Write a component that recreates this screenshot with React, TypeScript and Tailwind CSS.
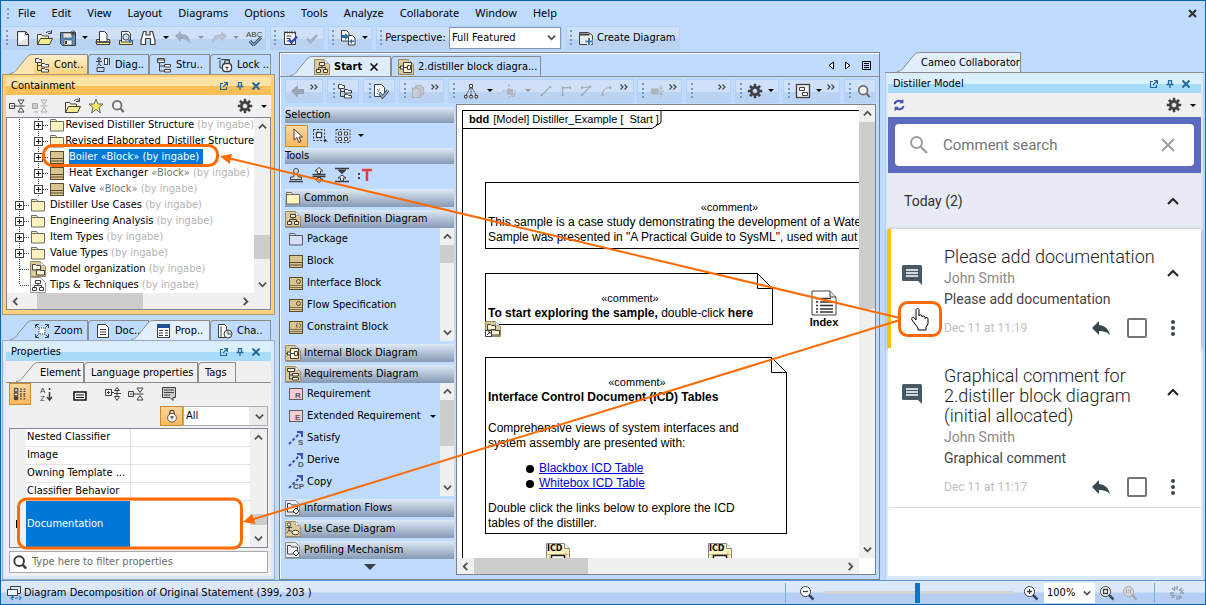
import React from "react";

const K = "#3f3f3f";
const Y = "#f5ec8e";
const TAN = "#d9c48f";
const B = "#3f7cb0";

const docTan = <path d="M.5.5h10l5 5v10H.5z" fill="#dcc99a" stroke="#9b8a60" />;
const docTanFold = <path d="M10.5.5v4h4z" fill="#fff" stroke="#aaa" />;

const ART: Record<string, React.ReactNode> = {
  file: <><path d="M2.5 1.5h8l3 3v11h-11z" fill="#e2e2e2" stroke={K} /><path d="M4 3h5v3h3v2l-8 4z" fill="#fff" /><path d="M10.500 1.500v3h3" fill="none" stroke={K} /></>,
  open: <><path d="M.500 14.500V4.500h4l1 1.500h6v3" fill="#fffbd0" stroke={K} /><path d="M.500 14.500l3-6h12l-3 6z" fill={Y} stroke={K} /><path d="M9 3c1.500-2 3.500-2 5-.5M14.500 0v3.500h-3.500" fill="none" stroke={K} /></>,
  save: <><path d="M.5 2.500h13l2 0v13h-13l-2-2z" fill="#5b8fc4" stroke={K} /><path d="M3 3h9v5H3z" fill="#e4e4e4" stroke={K} strokeWidth=".6" /><path d="M4 10h8v5H4z" fill="#f3f3f3" stroke={K} strokeWidth=".6" /><path d="M5 11h2v3H5z" fill={K} /><path d="M13 0v6M10 3h6M11 1l4 4M15 1l-4 4" stroke={K} strokeWidth=".8" /></>,
  print: <><path d="M1.500 9.500h13v5h-13z" fill={Y} stroke={K} /><path d="M4.500 1.500h5l2.500 2.500v8H4.500z" fill="#fff" stroke={K} /><path d="M.500 12h15" stroke={K} strokeWidth="1.500" /></>,
  preview: <><path d="M1.500 10.500h13v4h-13z" fill={Y} stroke={K} /><path d="M3.500 1.500h7l2 2v8.500h-9z" fill="#fff" stroke={K} /><circle cx="8" cy="7" r="3.200" fill="#bfe0ff" stroke={K} /><path d="M10.500 9.500l2.500 3" stroke={B} strokeWidth="2" /></>,
  binoc: <path d="M3.500 1.500h2.500v3.500h4V1.500h2.500l2.500 9v4h-4.500V8.500h-5v6H1.000v-4z" fill="#fff" stroke={K} strokeWidth="1.200" />,
  undo: <path d="M0 6l6-5v3c6 0 9.500 3 9.500 11C14 11 11 9 6 9v3z" fill="#9fadbd" />,
  redo: <path d="M16 6l-6-5v3C4 4 .500 7 .500 15 2 11 5 9 10 9v3z" fill="#b4c2d2" />,
  abc: <><text x="0" y="7" fontSize="8" fontFamily="Liberation Sans" fill={K}>ABC</text><path d="M4 11l3.500 4L15 7.500" fill="none" stroke={K} strokeWidth="3" /><path d="M4 11l3.500 4L15 7.500" fill="none" stroke="#6f9fd0" strokeWidth="1.500" /></>,
  note: <><path d="M2.500 2.500h11v12h-11z" fill="#fff" stroke={K} /><path d="M2 2.500h12" stroke={K} strokeWidth="2" strokeDasharray="1.500 1" /><path d="M4.500 6h5M4.500 8.500h4M4.500 11h3" stroke={K} /><path d="M7 9.500l2.500 3L15 6.500" fill="none" stroke="#2f45b5" strokeWidth="2.500" /></>,
  check: <path d="M3 8.500l3.500 3.500L13 5" fill="none" stroke="#a5b4c4" strokeWidth="3" />,
  transfer: <><path d="M1.500.500h5l2.500 2.500v8H1.500z" fill="#fff" stroke={K} /><path d="M8.500 5.500h4l2.500 2.500v7H8.500z" fill="#fff" stroke={K} /><path d="M2 5h3V3l4 3.500-4 3.500V8H2z" fill="#2d6ea8" /><path d="M14 12h-2v2l-3-2.800L12 9v1.500h2z" fill="#2d6ea8" /></>,
  create: <><path d="M1.500 2.500h9l4 3v9h-13z" fill="#e9e9e9" stroke={K} /><path d="M1.500 4.500h10" stroke={K} strokeWidth="2" /><path d="M11 8v7M7.500 11.500h7" stroke="#fff" strokeWidth="4" /><path d="M11 8v7M7.500 11.500h7" stroke={B} strokeWidth="2" /></>,
  tree: <><path d="M1.500 1.500h3l1 1h2v3h-6zM7.500 6.500h3l1 1h3v2.500h-7zM7.500 11.500h3l1 1h3v2.500h-7z" fill="#fff" stroke={K} /><path d="M3.500 6v7.500h4M3.500 8.500h4" fill="none" stroke={K} /></>,
  struct: <><path d="M1.500 1.500h7v4h-7zM8.500 7.500h6v2.500h-6zM8.500 12.500h6v2.500h-6z" fill="#fff" stroke={K} /><path d="M3.500 6v8h5M3.500 9h5M1.500 3h7" fill="none" stroke={K} /></>,
  diag: <><circle cx="4" cy="2" r="1.300" fill="none" stroke={K} /><path d="M4 3.500v3M1 4.500h6M2 9l2-2.500L6 9M2 10.500h7v4H2z" fill="none" stroke={K} /><rect x="9.500" y="1.500" width="3" height="6" fill="#fff" stroke={K} /><path d="M14.500 1v7" stroke={K} /></>,
  locktree: <><path d="M.5 1.500h3l1 1h8v2M3 3v8h3" fill="none" stroke={K} /><rect x="5.500" y="6.500" width="9" height="8" rx="3" fill="#fff" stroke={K} strokeWidth="1.300" /><path d="M7.500 6.500v-1a2.500 2.500 0 015 0v1M10 9.500v3M8.500 10.500h3" fill="none" stroke={K} strokeWidth="1.200" /></>,
  bdd: <>{docTan}{docTanFold}<path d="M5.500 3.500h5v3h-5zM2.500 10.500h4v3h-4zM9.500 10.500h4v3h-4z" fill="#fff6cf" stroke={K} /><path d="M8 6.500v2M4.500 10.500v-2h7v2" fill="none" stroke={K} /></>,
  bddw: <><path d="M.5.5h10l5 5v10H.5z" fill="#fff" stroke="#999" /><path d="M5.500 3.500h5v3h-5zM2.500 10.500h4v3h-4zM9.500 10.500h4v3h-4z" fill="#fff" stroke={K} /><path d="M8 6.500v2M4.500 10.500v-2h7v2" fill="none" stroke={K} /></>,
  ibd: <>{docTan}{docTanFold}<path d="M5.500 3.500h8v10h-8z" fill="#fff6cf" stroke={K} /><path d="M9.500 6.500h3v4h-3zM1 8.500h2M5 8.500h4" fill="none" stroke={K} /><rect x="2.500" y="7" width="3" height="3" fill="#fff" stroke={K} /></>,
  req: <>{docTan}{docTanFold}<path d="M2.500 2.500h7v3h-7zM7.500 7.500h6v2.500h-6zM7.500 11.500h6v2.500h-6z" fill="#fff6cf" stroke={K} /><path d="M4.500 5.500v7.500h3M4.500 9h3" fill="none" stroke={K} /></>,
  mdl: <>{docTan}{docTanFold}<path d="M2.500 3.500h3l1 1h4v4.500h-8zM6.500 8.500h3l1 1h4v4.500h-8z" fill="#fffbd0" stroke={K} /></>,
  mdllink: <>{docTan}{docTanFold}<path d="M2.500 3.500h3l1 1h4v4.500h-8zM6.500 8.500h3l1 1h4v4.500h-8z" fill="#fffbd0" stroke={K} /><path d="M.5 9.500h6v6h-6z" fill="#fff" stroke={K} /><path d="M2 14l3-3M3 11h2v2" fill="none" stroke={K} /></>,
  usecase: <>{docTan}{docTanFold}<circle cx="4" cy="3.500" r="1.700" fill="#fff" stroke={K} /><path d="M4 5v4M1.500 6.500h5.500M2 12l2-3 3 2" fill="none" stroke={K} /><ellipse cx="10.500" cy="11.500" rx="3.500" ry="2.200" fill="#fff6cf" stroke={K} /></>,
  prof: <><path d="M.5.500h10l4 4v11H.5z" fill="#e9ebf4" stroke="#888" /><path d="M2.500 3.500h3l1 1.500h6v7h-10z" fill="#fff" stroke={K} /><path d="M11 8l3 3-3 3-3-3z" fill="#fff" stroke={K} /></>,
  folder: <><path d="M1.500 14V2.500h5l1.500 2h6.500V14z" fill="#fff3bd" stroke="#6b6b6b" /><path d="M1.500 4.500h7" stroke="#6b6b6b" /></>,
  pkg: <><path d="M1.500 14V2.500h5l1.500 2h6.500V14z" fill="#d9def8" stroke="#5b5b66" /><path d="M1.500 4.500h7" stroke="#5b5b66" /></>,
  block: <><rect x="1.500" y="2.500" width="13" height="12" fill={TAN} stroke="#5a4d31" /><path d="M1.500 9.500h13M1.500 12h13" stroke="#5a4d31" /></>,
  iblock: <><rect x="1.500" y="2.500" width="13" height="12" fill={TAN} stroke="#5a4d31" /><path d="M1.500 10.500h13M1.500 12.500h13" stroke="#5a4d31" strokeWidth=".7" /><circle cx="10.500" cy="6.500" r="2" fill="none" stroke="#5a4d31" /></>,
  cblock: <><rect x="1.500" y="2.500" width="13" height="12" fill={TAN} stroke="#5a4d31" /><path d="M1.500 10.500h13M1.500 12.500h13" stroke="#5a4d31" strokeWidth=".7" /><path d="M9.500 4.500c-1.500 0 0 2-1.500 2 1.500 0 0 2 1.500 2M11.500 4.500c1.500 0 0 2 1.500 2-1.500 0 0 2-1.500 2" fill="none" stroke="#5a4d31" /></>,
  reqR: <><rect x="1.500" y="2.500" width="13" height="11" fill="#f8ccd2" stroke="#5b5b5b" /><text x="7" y="12" fontSize="8" fontWeight="bold" fontFamily="Liberation Sans" fill="#555">R</text></>,
  reqE: <><rect x="1.500" y="2.500" width="13" height="11" fill="#f8ccd2" stroke="#5b5b5b" /><text x="7" y="12" fontSize="8" fontWeight="bold" fontFamily="Liberation Sans" fill="#555">E</text></>,
  relS: <><path d="M1 14l12-12" stroke="#3f51b5" strokeWidth="2" strokeDasharray="3 2" /><path d="M9 2h5v5" fill="none" stroke="#3f51b5" strokeWidth="2" /><text x="10" y="15" fontSize="8" fontWeight="bold" fontFamily="Liberation Sans" fill="#555">S</text></>,
  relD: <><path d="M1 14l12-12" stroke="#3f51b5" strokeWidth="2" strokeDasharray="3 2" /><path d="M9 2h5v5" fill="none" stroke="#3f51b5" strokeWidth="2" /><text x="10" y="15" fontSize="8" fontWeight="bold" fontFamily="Liberation Sans" fill="#555">D</text></>,
  relC: <><path d="M1 14l12-12" stroke="#3f51b5" strokeWidth="2" strokeDasharray="3 2" /><path d="M9 2h5v5" fill="none" stroke="#3f51b5" strokeWidth="2" /><text x="5" y="15" fontSize="8" fontWeight="bold" fontFamily="Liberation Sans" fill="#555">CP</text></>,
  back: <path d="M1 8l7-6v4h6v5H8v4z" fill="#9aa6b5" />,
  verify: <><path d="M1.500 1.500h7l3 3v9h-10z" fill="#fff" stroke={K} /><path d="M4 6l4 5M4 11l3-6" stroke={K} strokeDasharray="1 1" /><path d="M6.500 10l3 4L15 7.500" fill="none" stroke={K} strokeWidth="3" /><path d="M6.500 10l3 4L15 7.500" fill="none" stroke="#8fb6d8" strokeWidth="1.500" /></>,
  copy: <><path d="M5.500 1.500h6l3 3v8h-9z" fill="#c3c7cc" stroke="#a8adb3" /><path d="M1.500 4.500h6l3 3v8h-9z" fill="#c8ccd0" stroke="#a8adb3" /></>,
  layout: <><path d="M6.500 1.500h3v3h-3zM1.500 12.500h2.500v2.500H1.500zM6.800 12.500h2.500v2.500H6.800zM12 12.500h2.500v2.500H12z" fill="#fff" stroke={K} /><path d="M8 4.500v8M7 5L3 12.500M9 5l4.500 7.500" stroke={K} strokeDasharray="2 1" /></>,
  cross: <><rect x="6" y="6" width="6" height="6" fill="#b5b9be" /><path d="M8 1v14M1 8h14" stroke="#a8adb3" strokeDasharray="3 1" /><rect x="10" y="10" width="4" height="4" fill="#b5b9be" /></>,
  line: <><path d="M3 13L13 3" stroke="#a8adb3" strokeWidth="1.500" /><path d="M1 12h3v3H1zM12 1h3v3h-3z" fill="#a8adb3" /></>,
  rect1: <><path d="M3.500 14V3.500H13" fill="none" stroke="#a8adb3" strokeWidth="1.500" /><path d="M2 12h3v3H2zM12 2h3v3h-3zM2 2h3v3H2z" fill="#a8adb3" /></>,
  obl: <><path d="M3 3h10L3 13h2" fill="none" stroke="#a8adb3" strokeWidth="1.500" /><path d="M1 12h3v3H1zM12 1h3v3h-3zM1 2h3v3H1z" fill="#a8adb3" /></>,
  arc: <><path d="M3 14c0-7 3-10 11-11" fill="none" stroke="#a8adb3" strokeWidth="1.500" /><path d="M2 12h3v3H2zM12 2h3v3h-3z" fill="#a8adb3" /></>,
  size: <><rect x="1" y="5" width="9" height="7" fill="#b0b5ba" /><path d="M12.500 1v5M12.500 15v-5M10 8h6M10.500 4l2 2 2-2M10.500 12l2-2 2 2" fill="none" stroke="#a8adb3" /></>,
  gear: <><path d="M7 1h2v2.200l1.500.6L12.200 2.200l1.500 1.500-1.600 1.700.6 1.600H15v2h-2.300l-.6 1.600 1.600 1.700-1.500 1.500-1.700-1.600-1.500.6V15H7v-2.200l-1.500-.6-1.700 1.600-1.500-1.500 1.600-1.700L3.300 9H1V7h2.300l.6-1.600-1.600-1.700 1.500-1.500 1.700 1.600L7 3.200zM8 5.500a2.500 2.500 0 100 5 2.500 2.500 0 000-5z" fill={K} stroke={K} strokeWidth=".5" fillRule="evenodd" /></>,
  align: <><rect x="1.500" y="1.500" width="13" height="13" fill="#eee" stroke={K} strokeWidth="1.300" /><path d="M4.500 4.500h5v3h-5zM7.500 9.500h5v3h-5z" fill="#fff" stroke={K} /></>,
  mag: <><circle cx="7" cy="7" r="5" fill="#f4f4f4" stroke="#6a6a6a" strokeWidth="2" /><path d="M11 11l3.500 4" stroke="#6a6a6a" strokeWidth="2.500" /></>,
  magDark: <><circle cx="7" cy="7" r="5.500" fill="#fff" stroke="#3a3a3a" strokeWidth="2.200" /><path d="M11 11l4 4.500" stroke="#3a3a3a" strokeWidth="2.800" /></>,
  collapse: <><path d="M.5 5.500h5v5h-5zM2 8h2.500M6 8h2.500" fill="none" stroke={K} /><path d="M9 2h6l-3 4.500zM9 14h6l-3-4.500z" fill="#fff" stroke={K} /><path d="M8.500 8h7" stroke={K} /></>,
  collapseG: <><path d="M.5 5.500h5v5h-5z" fill="#ccc" stroke="#aaa" /><path d="M9 2h6l-3 4.500zM9 14h6l-3-4.500zM8.500 8h7M2 14h4" fill="none" stroke="#aaa" /></>,
  expand: <><path d="M.5 3.500h6v6h-6zM2 6.500h3M3.500 5v3M7 6.500h2" fill="none" stroke={K} /><path d="M9.500 4.500h5l-2.500-3zM9.500 10.500h5l-2.500 4zM9 7.500h7M12 5v6" fill="#fff" stroke={K} /></>,
  star: <path d="M8 1l2 5h5l-4 3.500 1.500 5.500L8 11.500 3.500 15 5 9.500 1 6h5z" fill="#f6ec6a" stroke="#666" />,
  zoomfit: <><rect x="5" y="5" width="6" height="6" fill="#fff" stroke={K} strokeDasharray="1 1" /><path d="M1.500 5V1.500H5M11 1.500h3.500V5M14.500 11v3.500H11M5 14.500H1.500V11M2 2l2.500 2.500M14 2l-2.500 2.500M14 14l-2.500-2.500M2 14l2.500-2.500" fill="none" stroke={K} /></>,
  doc: <><path d="M2.500 1.500h8l3 3v10h-11z" fill="#fff" stroke={K} /><path d="M5 6.500h6M5 9h6M5 11.500h6" stroke={K} /></>,
  props: <><rect x="2.500" y="1.500" width="12" height="13" fill="#fff" stroke={K} /><path d="M2 1h13v4H2z" fill="#1f4f9a" /><path d="M4 7.500h4M10 7.500h3M4 10h4M10 10h3M4 12.500h4M10 12.500h3" stroke={K} /></>,
  hist: <><path d="M1.500 1.500h6l2 2v11h-8zM4 3.500v11" fill="#fff" stroke={K} /><circle cx="11" cy="11" r="4" fill="#eee" stroke={K} /><path d="M11 8v3h3" fill="none" stroke={K} /></>,
  cat: <><path d="M1.500 1.500h4v4h-4zM1.500 6.500h4v4h-4zM1.500 11.500h4v3h-4z" fill={K} stroke={K} /><path d="M2 3.500h3M3.500 2v3M2 8.500h3M3.500 7v3" stroke="#fff" /><path d="M8 2.500h2M12 2.500h2M8 5h2M12 5h2M8 8h2M12 8h2M8 10.500h2M12 10.500h2M8 13.500h2M12 13.500h2" stroke={K} strokeWidth="1.500" /></>,
  az: <><text x="1" y="7" fontSize="8" fontFamily="Liberation Sans" fill={K}>A</text><text x="1" y="15" fontSize="8" fontFamily="Liberation Sans" fill={K}>Z</text><path d="M10.500 2v2M10.500 6v7M8 11l2.500 3 2.500-3" fill="none" stroke={K} strokeWidth="1.500" /></>,
  field: <><rect x="2" y="6" width="12" height="8" fill="#fff" stroke="#000" strokeWidth="1.400" /><path d="M4 9h8M4 11.500h8" stroke="#000" /></>,
  speech: <><path d="M1.500 1.500h13v10H12v3l-3-3H1.500z" fill="#ccc" stroke={K} /><path d="M3 4h10M3 6.500h10M3 9h6" stroke={K} /></>,
  lock: <><circle cx="8" cy="10" r="5" fill="#fff" stroke={K} /><path d="M5.500 6V4a2.500 2.500 0 015 0v2M8 8.500v3.500M6 9h4" fill="none" stroke={K} strokeWidth="1.200" /></>,
  cursor: <path d="M5 1v11l3-2.500 2 5 2-1-2-4.500h3.500z" fill="#fff" stroke={K} />,
  sel: <><path d="M1.500 1.500h11v11h-11z" fill="none" stroke={K} strokeDasharray="2 1.500" /><rect x="4.500" y="4.500" width="5" height="5" fill="#fff" stroke={K} strokeWidth="1.300" /><path d="M12 10v5l1.500-1.500H16z" fill={K} /></>,
  selmany: <><path d="M1 1.500h14v13H1z" fill="none" stroke={K} strokeDasharray="2 1.500" /><path d="M3.500 4h3v3h-3zM9.500 4h3v3h-3zM3.500 9.500h3v3h-3zM9.500 9.500h3v3h-3z" fill="#fff" stroke={K} /></>,
  stamp: <><circle cx="8" cy="4" r="2.500" fill="#ddd" stroke={K} /><path d="M6.500 6.500L5.500 10H2.500v2.500h11V10h-3L9.500 6.500" fill="#ddd" stroke={K} /><path d="M1 14.500h14" stroke={K} strokeWidth="1.500" /></>,
  split: <><path d="M8 .5l4 3.500H9.500v2.500h-3V4H4zM8 15.500L4 12h2.500v-1.500h3V12H12z" fill="#e8e8e8" stroke={K} /><path d="M1.500 7.500h13M1.500 9.500h13" stroke={K} strokeWidth="1.300" /></>,
  merge: <><path d="M1 1.500h14M1 14.500h14" stroke={K} strokeWidth="1.500" /><path d="M8 6.500L4 3h8z" fill={K} stroke={K} /><path d="M8 8l4 3H9.500v3h-3v-3H4z" fill="#e8e8e8" stroke={K} /></>,
  text: <><path d="M5 3h10M10 3v11" stroke="#e53935" strokeWidth="2.500" /><path d="M2 6v2M2 10v2" stroke="#444" strokeWidth="2" /></>,
  zin: <><circle cx="6.500" cy="6.500" r="5" fill="#fff" stroke={K} /><path d="M4 6.500h5M6.500 4v5" stroke={K} strokeWidth="1.300" /><path d="M10 10l4.500 4.500" stroke="#3a4a63" strokeWidth="2.500" /></>,
  zout: <><circle cx="6.500" cy="6.500" r="5" fill="#fff" stroke={K} /><path d="M4 6.500h5" stroke={K} strokeWidth="1.300" /><path d="M10 10l4.500 4.500" stroke="#3a4a63" strokeWidth="2.500" /></>,
  zfit: <><circle cx="6.500" cy="6.500" r="5" fill="#fff" stroke={K} /><path d="M4.500 4.500h4v4h-4z" fill="none" stroke={K} strokeWidth="1.300" /><path d="M10 10l4.500 4.500" stroke="#3a4a63" strokeWidth="2.500" /></>,
  zone: <><circle cx="6.500" cy="6.500" r="5" fill="#d6d6d6" stroke="#aaa" /><path d="M4.500 4.500v4M8.500 4.500v4M6.500 5v1M6.500 7.500v1" stroke="#aaa" /><path d="M10 10l4.500 4.500" stroke="#aaa" strokeWidth="2.500" /></>,
  spin: <g stroke="#8d9aab" strokeWidth="1.300"><path d="M8 1v4M8 11v4M1 8h4M11 8h4M3 3l2.800 2.800M10.200 10.200L13 13M3 13l2.800-2.800M10.200 5.800L13 3M5.300 1.500l1 3M10.700 14.500l-1-3M1.500 10.700l3-1M14.500 5.300l-3 1" /></g>,
  pc: <><path d="M4.500 1.500h10v7h-10z" fill="#dcebfa" stroke={K} /><path d="M1.500 4.500h10v6h-10z" fill="#eef6ff" stroke={K} /><path d="M5 12.500h3M6.500 10.500v2" stroke={K} /><path d="M7 11l-2 2 2 2M13 11l2 2-2 2M9 13h3" fill="none" stroke="#2d7ec4" strokeWidth="1.200" /></>,
  refresh: <><path d="M2 7c0-3 3-5 6-5l3 .5 2-1.500v5H8l1.500-1.500C7 3.500 5 5 4 7zM14 9c0 3-3 5-6 5l-3-.5L3 15v-5h5l-1.500 1.500C9 12.500 11 11 12 9z" fill="#3f51b5" /></>,
};

function Icon({ n, className = "size-4" }: { n: string; className?: string }) {
  return (
    <svg viewBox="0 0 16 16" className={`shrink-0 ${className}`} aria-hidden="true">
      {ART[n]}
    </svg>
  );
}

function Tool({ n, label = n, className = "size-4" }: { n: string; label?: string; className?: string }) {
  return (
    <button type="button" aria-label={label} className="flex shrink-0 items-center justify-center">
      <Icon n={n} className={className} />
    </button>
  );
}

function Drop({ className = "text-black" }: { className?: string }) {
  return (
    <svg viewBox="0 0 6 3" className={`h-[3px] w-[6px] shrink-0 ${className}`} aria-hidden="true">
      <path d="M0 0h6L3 3z" fill="currentColor" />
    </svg>
  );
}

function More() {
  return (
    <svg viewBox="0 0 8 6" className="mb-2 h-[6px] w-2 shrink-0" aria-hidden="true">
      <path d="M.5.500L3 3 .5 5.500M4.500.500L7 3 4.500 5.500" fill="none" stroke="#444" strokeWidth="1.200" />
    </svg>
  );
}

function Grip() {
  return <span className="h-[15px] w-0 shrink-0 border-l-2 border-dotted border-[#6f9bd1]" />;
}

function Group({ className = "", children }: { className?: string; children: React.ReactNode }) {
  return (
    <div className={`flex h-6 shrink-0 items-center border border-[#b4d2f6] bg-linear-to-b from-[#cfe1f8] from-55% to-[#bad3f3] to-55% ${className}`}>
      {children}
    </div>
  );
}

function Chevron({ d, className }: { d: string; className: string }) {
  return (
    <svg viewBox="0 0 10 10" className={`shrink-0 ${className}`} aria-hidden="true">
      <path d={d} fill="none" stroke="#505050" strokeWidth="2" />
    </svg>
  );
}

function VScroll({ gap, thumb, width = "w-4" }: { gap: string; thumb: string; width?: string }) {
  return (
    <div className={`flex shrink-0 flex-col items-center bg-[#f0f0f0] ${width}`}>
      <span className="flex h-[17px] items-center"><Chevron d="M1 7l4-4 4 4" className="size-[9px]" /></span>
      <span className={`min-h-0 shrink ${gap}`} />
      <span className={`w-full bg-[#cdcdcd] ${thumb}`} />
      <span className="mt-auto flex h-[17px] items-center"><Chevron d="M1 3l4 4 4-4" className="size-[9px]" /></span>
    </div>
  );
}

function HScroll({ gap, thumb }: { gap: string; thumb: string }) {
  return (
    <div className="flex h-4 flex-1 items-center bg-[#f0f0f0]">
      <span className="flex w-[17px] justify-center"><Chevron d="M7 1L3 5l4 4" className="size-[9px]" /></span>
      <span className={gap} />
      <span className={`h-full bg-[#cdcdcd] ${thumb}`} />
      <span className="ml-auto flex w-[17px] justify-center"><Chevron d="M3 1l4 4-4 4" className="size-[9px]" /></span>
    </div>
  );
}

function Slant({ tone }: { tone: string }) {
  return (
    <svg viewBox="0 0 24 20" preserveAspectRatio="none" className={`h-5 w-6 shrink-0 ${tone}`} aria-hidden="true">
      <path d="M0 20C4 19 5 18 8 14L17 3C19 1 20 .5 24 .5V20z" fill="currentColor" />
      <path d="M0 19.500C4 19 5 18 8 14L17 3C19 1 20 .5 24 .5" fill="none" stroke="#8c8c8c" />
    </svg>
  );
}

function Tab({ icon, label, className, slant, tone = "bg-[#bfdbff]" }: { icon?: string; label: string; className: string; slant?: string; tone?: string }) {
  return (
    <button type="button" role="tab" className={`flex h-5 shrink-0 ${className}`}>
      {slant && <Slant tone={slant} />}
      <span className={`flex h-5 min-w-0 flex-1 items-center gap-1 border-t border-r border-[#8c8c8c] whitespace-nowrap ${tone} ${slant ? "" : "rounded-tl-sm border-l pl-[6px]"}`}>
        {icon && <Icon n={icon} />}
        {label}
      </span>
    </button>
  );
}

function TitleBar({ title, tone }: { title: string; tone: string }) {
  return (
    <div className={`flex h-[18px] shrink-0 items-center bg-linear-to-b pr-[10px] pl-[5px] ${tone}`}>
      <h2 className="flex-1">{title}</h2>
      <div className="flex items-center gap-[6px] text-[#256a9e]">
        <button type="button" aria-label="Float" className="p-px">
          <svg viewBox="0 0 8 8" className="size-[8px]"><path d="M3 1.500H.5v6h6V5M4 .5h3.500V4M7 1L3 5" fill="none" stroke="currentColor" strokeWidth="1.200" /></svg>
        </button>
        <button type="button" aria-label="Pin" className="p-px">
          <svg viewBox="0 0 8 8" className="size-[8px]"><path d="M2 .5h4M2.500.500v4M5.500.500v4M.5 4.500h7M4 4.500V8" fill="none" stroke="currentColor" strokeWidth="1.300" /></svg>
        </button>
        <button type="button" aria-label="Close" className="p-px">
          <svg viewBox="0 0 8 8" className="size-[8px]"><path d="M.5.500l7 7M7.500.500l-7 7" stroke="currentColor" strokeWidth="2" /></svg>
        </button>
      </div>
    </div>
  );
}

function Guide({ kind }: { kind: "line" | "plus" | "branch" | "end" }) {
  return (
    <svg viewBox="0 0 19 16" className="h-4 w-[19px] shrink-0" aria-hidden="true">
      <g stroke="#444" strokeDasharray="1 1" fill="none">
        <path d={kind === "end" ? "M9.500 0v8" : "M9.500 0v16"} />
        {kind !== "line" && <path d="M10 8.500h9" />}
      </g>
      {kind === "plus" && (
        <>
          <rect x="5.500" y="4.500" width="8" height="8" fill="#fff" stroke="#444" />
          <path d="M7 8.500h5M9.500 6v5" stroke="#222" />
        </>
      )}
    </svg>
  );
}

const NODES = [
  { deep: true, icon: "folder", name: "Revised Distiller Structure" },
  { deep: true, icon: "folder", name: "Revised Elaborated  Distiller Structure" },
  { deep: true, icon: "block", name: "Boiler", stereo: true, selected: true },
  { deep: true, icon: "block", name: "Heat Exchanger", stereo: true },
  { deep: true, icon: "block", name: "Valve", stereo: true },
  { icon: "folder", name: "Distiller Use Cases" },
  { icon: "folder", name: "Engineering Analysis" },
  { icon: "folder", name: "Item Types" },
  { icon: "folder", name: "Value Types" },
  { icon: "mdl", name: "model organization", leaf: true },
  { icon: "bddw", name: "Tips & Techniques", leaf: true, last: true },
];

function Containment() {
  return (
    <section className="flex min-h-0 flex-1 flex-col border border-[#a8987a] bg-[#ffd17a] px-[3px] pt-[2px] pb-1">
      <TitleBar title="Containment" tone="from-[#ffe2a6] from-50% to-[#ffbf57] to-50%" />
      <div className="flex h-[22px] shrink-0 items-center bg-[#f0f0f0] pr-1 pl-[3px]">
        <div className="flex flex-1 items-center gap-[7px]">
          <Tool n="collapse" /><Tool n="collapseG" label="Collapse selected" />
          <span className="w-[3px]" />
          <Tool n="open" /><Tool n="star" label="Favorites" /><Tool n="mag" label="Find" className="size-[14px]" />
        </div>
        <div className="flex items-center gap-2"><Tool n="gear" label="Options" /><Drop /></div>
      </div>
      <div className="flex min-h-0 flex-1 border border-b-0 border-[#7f8792] bg-white">
        <ul className="flex min-w-0 flex-1 flex-col justify-end overflow-hidden pl-[3px]">
          {NODES.map((n) => (
            <li key={n.name} className="flex h-4 shrink-0 items-center whitespace-pre">
              {n.deep && <Guide kind="line" />}
              <Guide kind={n.last ? "end" : n.leaf ? "branch" : "plus"} />
              <span className="flex w-[21px] pl-px"><Icon n={n.icon} /></span>
              <span className={n.selected ? "bg-[#0078d7] pr-1 text-white" : ""}>
                {n.name}
                {n.stereo && <span className={n.selected ? "" : "text-[#777]"}> «Block»</span>}
                {n.name.includes("Elaborated") ? null : <span className={n.selected ? "" : "text-[#b4b4b4]"}> (by ingabe)</span>}
              </span>
            </li>
          ))}
        </ul>
        <VScroll gap="h-[100px]" thumb="h-6" />
      </div>
      <div className="flex shrink-0 border border-t-0 border-[#7f8792] bg-[#f0f0f0] pr-4">
        <HScroll gap="w-[13px]" thumb="w-[106px]" />
      </div>
    </section>
  );
}

function Properties() {
  return (
    <section className="flex h-[240px] shrink-0 flex-col border border-[#9dabc0] bg-[#dbe9fc] p-[3px] pt-[2px]">
      <TitleBar title="Properties" tone="from-[#daf1fd] from-50% to-[#a6dcf8] to-50%" />
      <div role="tablist" className="flex shrink-0 items-end border-b border-[#8c8c8c] bg-[#f0f0f0] pt-px pl-[10px]">
        <Tab label="Element" slant="text-[#f0f0f0]" tone="bg-[#f0f0f0]" className="w-[68px]" />
        <Tab label="Language properties" tone="bg-[#f0f0f0]" className="w-[114px]" />
        <Tab label="Tags" tone="bg-[#f0f0f0]" className="w-[38px]" />
      </div>
      <div className="flex min-h-0 flex-1 flex-col bg-[#f0f0f0] px-[3px] pb-[3px]">
        <div className="flex shrink-0 items-center gap-2">
          <button type="button" aria-label="Categorized view" className="flex size-[22px] items-center justify-center border border-[#c98a32] bg-linear-to-b from-[#fbd79c] to-[#fdb75a]"><Icon n="cat" className="size-[14px]" /></button>
          <div className="flex items-center gap-[7px]">
            <Tool n="az" label="Sort" /><span className="w-[3px]" /><Tool n="field" label="Show description" />
            <span className="w-[3px]" /><Tool n="expand" /><Tool n="collapse" /><span className="w-[3px]" /><Tool n="speech" label="Comment" />
          </div>
        </div>
        <div className="flex shrink-0 items-center justify-end pt-px">
          <button type="button" aria-label="Lock" className="flex h-5 w-[23px] items-center justify-center border border-[#c98a32] bg-linear-to-b from-[#fbd79c] to-[#fdb75a]"><Icon n="lock" className="size-[14px]" /></button>
          <div className="relative flex">
            <select aria-label="Mode" className="h-5 w-[85px] appearance-none border border-[#adadad] bg-linear-to-r from-white from-78% to-[#ececec] to-78% pl-[2px]"><option>All</option></select>
            <span className="pointer-events-none absolute inset-y-0 right-1 flex items-center"><Chevron d="M1 3l4 4 4-4" className="size-[9px]" /></span>
          </div>
        </div>
        <div className="mt-[2px] flex min-h-0 flex-1 border border-[#7f8792]">
          <table className="min-w-0 flex-1 table-fixed border-collapse bg-white">
            <tbody className="block">
              {["Nested Classifier", "Image", "Owning Template ...", "Classifier Behavior"].map((p) => (
                <tr key={p} className="flex h-[18px]">
                  <td className="w-4 bg-[#f0f0f0]" />
                  <th scope="row" className="w-[105px] border-r border-b border-[#e3e3e3] pl-px text-left font-normal whitespace-nowrap">{p}</th>
                  <td className="flex-1 border-b border-[#e3e3e3]" />
                </tr>
              ))}
              <tr className="flex h-[46px]">
                <td className="flex w-4 items-center bg-[#f0f0f0] pl-[6px]"><span className="h-2 w-1 bg-black" /></td>
                <th scope="row" className="flex w-[105px] items-center border-r border-white bg-[#0078d7] pl-px font-normal text-white">Documentation</th>
                <td className="flex-1" />
              </tr>
            </tbody>
          </table>
          <VScroll gap="h-[68px]" thumb="h-[11px]" width="w-[17px]" />
        </div>
        <label className="mt-[3px] flex h-[22px] shrink-0 items-center gap-[5px] border border-[#a9a9a9] bg-white px-[3px]">
          <Icon n="magDark" className="size-[14px]" />
          <input aria-label="Filter properties" placeholder="Type here to filter properties" className="min-w-0 flex-1 placeholder:text-[#6b6b6b]" />
        </label>
      </div>
    </section>
  );
}

function Header({ icon, label }: { icon?: string; label: string }) {
  return (
    <button type="button" className={`flex w-full shrink-0 items-center gap-[3px] bg-linear-to-b from-[#dfeaf7] to-[#8799b4] text-left ${icon ? "h-[18px]" : "h-4"}`}>
      {icon && <Icon n={icon} />}
      {label}
    </button>
  );
}

function List({ items, gap, thumb }: { items: [string, string][]; gap: string; thumb: string }) {
  return (
    <div className="flex h-[113px] shrink-0">
      <ul className="min-w-0 flex-1 pl-[3px]">
        {items.map(([icon, label]) => (
          <li key={label} className="flex h-[22px] items-center gap-[3px] pr-1 whitespace-nowrap">
            <Icon n={icon} />
            <span className="flex-1">{label}</span>
            {label === "Extended Requirement" && <Drop />}
          </li>
        ))}
      </ul>
      <VScroll gap={gap} thumb={thumb} width="w-[14px]" />
    </div>
  );
}

function Palette() {
  return (
    <aside className="flex w-[172px] shrink-0 flex-col overflow-hidden pt-[3px] pr-[2px] pl-px">
      <Header label="Selection" />
      <div className="flex h-[25px] shrink-0 items-center gap-1">
        <button type="button" aria-label="Select" className="flex h-[22px] w-[23px] items-center justify-center border border-[#c98a32] bg-linear-to-b from-[#fbd79c] to-[#fdb75a]"><Icon n="cursor" /></button>
        <div className="flex items-center gap-[7px]"><Tool n="sel" label="Group select" /><Tool n="selmany" label="Select all of type" /><Drop /></div>
      </div>
      <Header label="Tools" />
      <div className="flex h-[25px] shrink-0 items-start gap-[7px] pt-[3px] pl-[3px]">
        <Tool n="stamp" /><Tool n="split" /><Tool n="merge" /><Tool n="text" />
      </div>
      <div className="flex flex-col gap-[3px]">
        <Header icon="folder" label="Common" />
        <div>
          <Header icon="bdd" label="Block Definition Diagram" />
          <List gap="h-0" thumb="h-[18px]" items={[["pkg", "Package"], ["block", "Block"], ["iblock", "Interface Block"], ["iblock", "Flow Specification"], ["cblock", "Constraint Block"]]} />
        </div>
        <Header icon="ibd" label="Internal Block Diagram" />
        <div>
          <Header icon="req" label="Requirements Diagram" />
          <List gap="h-0" thumb="h-[46px]" items={[["reqR", "Requirement"], ["reqE", "Extended Requirement"], ["relS", "Satisfy"], ["relD", "Derive"], ["relC", "Copy"]]} />
        </div>
        <Header icon="prof" label="Information Flows" />
        <Header icon="usecase" label="Use Case Diagram" />
        <Header icon="prof" label="Profiling Mechanism" />
        <svg viewBox="0 0 12 6" className="mt-[2px] h-[6px] w-3 self-center" aria-hidden="true"><path d="M0 0h12L6 6z" fill="#3a3f4a" /></svg>
      </div>
    </aside>
  );
}

function Fold() {
  return (
    <svg viewBox="0 0 17 17" className="absolute -top-px -right-px size-[17px]" aria-hidden="true">
      <path d="M1 0h16v16z" fill="#fff" />
      <path d="M1.500 0v15.500H17M1.500.500L16.500 15.500" fill="none" stroke="#000" />
    </svg>
  );
}

function IcdIcon() {
  return (
    <svg viewBox="0 0 24 15" className="h-[15px] w-6" aria-hidden="true">
      <path d="M.5 15V.5h18l5 5V15" fill="#fbf6c0" stroke="#888" />
      <path d="M18.500.500v5h5" fill="#fff" stroke="#888" />
      <path d="M1 11.500h22M4 11v4M20 8v7" stroke="#d9b98c" />
      <text x="1" y="8" fontSize="8" fontWeight="bold" fontFamily="DejaVu Sans" fill="#000">ICD</text>
      <path d="M5.500 15v-2.500h13V15" fill="#fff" stroke="#222" strokeWidth="1.500" />
    </svg>
  );
}

function Canvas() {
  return (
    <div className="flex min-w-0 flex-1 flex-col border border-[#7b828c] bg-white">
      <div className="flex min-h-0 flex-1">
        <div className="relative min-w-0 flex-1 overflow-hidden font-['Liberation_Sans',sans-serif] text-xs leading-[15px]">
          <div className="absolute top-[5px] -right-1 -bottom-1 left-[5px] border border-black">
            <svg viewBox="0 0 200 19" className="absolute top-0 left-0 h-[19px] w-[200px]" aria-hidden="true">
              <path d="M0 17.500h189l9-6V0" fill="none" stroke="#000" />
            </svg>
            <p className="relative flex h-[17px] items-center gap-1 pl-[6px] text-[11px] whitespace-pre"><b>bdd</b><span>[Model] Distiller_Example [  Start ]</span></p>
          </div>
          <div className="absolute top-[77px] -right-1 left-7 h-[67px] border border-black pt-4 pl-[2px]">
            <p className="w-[483px] text-center text-[11px] leading-4">«comment»</p>
            <p className="whitespace-nowrap">This sample is a case study demonstrating the development of a Wate</p>
            <p className="whitespace-nowrap">Sample was presented in "A Practical Guide to SysML", used with aut</p>
          </div>
          <div className="absolute top-[168px] left-7 h-[52px] w-[288px] border border-black pt-4 pl-[2px]">
            <Fold />
            <p className="text-center text-[11px] leading-4">«comment»</p>
            <p className="whitespace-nowrap"><b>To start exploring the sample,</b> double-click <b>here</b></p>
          </div>
          <span className="absolute top-[216px] left-7"><Icon n="mdllink" /></span>
          <div className="absolute top-[185px] left-[346px] flex w-[42px] flex-col items-center">
            <svg viewBox="0 0 26 26" className="size-[26px]" aria-hidden="true">
              <path d="M1 1h18l6 6v18H1z" fill="#fff" stroke="#444" />
              <path d="M19 1v6h6" fill="#ddd" stroke="#444" />
              <path d="M5 8.500h2M5 12h2M5 15.500h2M5 19h2M5 22h2M9 8.500h11M9 12h13M9 15.500h13M9 19h13M9 22h13" stroke="#333" strokeWidth="1.500" />
            </svg>
            <b className="text-[11px] leading-[13px]">Index</b>
          </div>
          <div className="absolute top-[252px] left-7 h-[177px] w-[302px] border border-black pt-4 pl-[2px]">
            <Fold />
            <p className="text-center text-[11px] leading-4">«comment»</p>
            <p className="font-bold">Interface Control Document (ICD) Tables</p>
            <p className="pt-4">Comprehensive views of system interfaces and<br />system assembly are presented with:</p>
            <ul className="py-[10px] pl-[38px]">
              {["Blackbox ICD Table", "Whitebox ICD Table"].map((t) => (
                <li key={t} className="flex items-center gap-[5px]">
                  <span className="size-2 rounded-full bg-black" />
                  <a href="#icd" className="text-[#0000e0] underline">{t}</a>
                </li>
              ))}
            </ul>
            <p>Double click the links below to explore the ICD<br />tables of the distiller.</p>
          </div>
          <span className="absolute bottom-0 left-[89px]"><IcdIcon /></span>
          <span className="absolute bottom-0 left-[251px]"><IcdIcon /></span>
        </div>
        <VScroll gap="h-0" thumb="h-[187px]" />
      </div>
      <div className="flex shrink-0 pr-4"><HScroll gap="w-0" thumb="w-[114px]" /></div>
    </div>
  );
}

function Editor() {
  return (
    <main className="mt-[2px] flex min-w-0 flex-1 flex-col border border-[#7b828c] bg-[#bfdbff] shadow-[inset_1px_1px_0_#fff]">
      <div role="tablist" className="flex h-6 shrink-0 items-end border-b border-[#8c8c8c] pl-[10px]">
        <button type="button" role="tab" className="flex h-5 w-[101px] shrink-0">
          <Slant tone="text-[#dfecfc]" />
          <span className="flex h-5 flex-1 items-center gap-1 border-t border-r border-[#8c8c8c] bg-[#dfecfc] font-bold">
            <Icon n="bdd" />Start
            <svg viewBox="0 0 8 8" className="ml-1 size-2"><path d="M.5.500l7 7M7.500.500l-7 7" stroke="#000" strokeWidth="1.500" /></svg>
          </span>
        </button>
        <Tab icon="ibd" label="2.distiller block diagra..." className="w-[150px]" />
        <div className="mb-[6px] ml-auto flex items-center gap-[11px] pr-2">
          <button type="button" aria-label="Previous tab"><svg viewBox="0 0 6 9" className="h-[9px] w-[6px]"><path d="M5.500 1v7L1 4.500z" fill="#fff" stroke="#000" /></svg></button>
          <button type="button" aria-label="Next tab"><svg viewBox="0 0 6 9" className="h-[9px] w-[6px]"><path d="M.5 1v7L5 4.500z" fill="#fff" stroke="#000" /></svg></button>
          <button type="button" aria-label="Tab list"><svg viewBox="0 0 9 9" className="size-[9px]"><path d="M.5.500h8v8h-8zM2 2.500h5M2 4.500h5M2 6.500h5" fill="none" stroke="#000" /></svg></button>
        </div>
      </div>
      <div className="flex min-h-0 flex-1 flex-col pr-[3px] pb-1 pl-1">
        <div className="flex h-[27px] shrink-0 items-center justify-between overflow-hidden pl-px">
          <Group className="w-[38px] justify-between px-1"><Tool n="back" /><More /></Group>
          <Group className="w-8 justify-between px-[5px]"><Grip /><Tool n="tree" /></Group>
          <Group className="w-8 justify-between px-[5px]"><Grip /><Tool n="verify" /></Group>
          <Group className="w-[45px] justify-between px-1"><Grip /><Tool n="copy" className="size-[14px]" /><More /></Group>
          <Group className="w-[186px] justify-between px-1"><Grip /><Tool n="layout" /><Drop /><Tool n="cross" /><Drop className="text-[#999]" /><Tool n="line" className="size-3" /><Tool n="rect1" className="size-3" /><Tool n="obl" className="size-3" /><Tool n="arc" className="size-3" /><More /></Group>
          <Group className="w-[45px] justify-between px-1"><Grip /><Tool n="size" className="size-[14px]" /><More /></Group>
          <Group className="w-[45px] justify-between px-1"><Grip /><More /></Group>
          <Group className="w-11 justify-between px-1"><Grip /><Tool n="gear" label="Diagram options" /><Drop /></Group>
          <Group className="w-[57px] justify-between px-1"><Grip /><Tool n="align" /><Drop /><More /></Group>
          <Group className="w-8 justify-between px-1"><Grip /><Tool n="mag" label="Search diagram" className="size-[14px]" /></Group>
        </div>
        <div className="flex min-h-0 flex-1"><Palette /><Canvas /></div>
      </div>
    </main>
  );
}

function Caret() {
  return <svg viewBox="0 0 12 8" className="h-2 w-3" aria-hidden="true"><path d="M1 7l5-5 5 5" fill="none" stroke="#222" strokeWidth="2" /></svg>;
}

function Comment({ title, body, date, className }: { title: string; body: string; date: string; className: string }) {
  return (
    <article className={`flex shrink-0 bg-white pt-[18px] pb-px pl-[11px] ${className}`}>
      <svg viewBox="0 0 20 20" className="mt-[18px] size-5 shrink-0" aria-hidden="true">
        <path d="M1.500 0h17A1.500 1.500 0 0120 1.500V20l-4-4H1.500A1.500 1.500 0 010 14.500v-13A1.500 1.500 0 011.500 0z" fill="#455a64" />
        <path d="M4 5h12M4 8h12M4 11h12" stroke="#fff" strokeWidth="1.500" />
      </svg>
      <div className="min-w-0 flex-1 pl-[22px]">
        <div className="flex items-center">
          <div className="flex-1">
            <h3 className="text-lg leading-5 font-light text-[#222]">{title}</h3>
            <p className="text-sm leading-[22px] text-[#8a8a8a]">John Smith</p>
            <p className="text-sm leading-5 text-[#444]">{body}</p>
          </div>
          <button type="button" aria-label="Collapse comment" className="mr-[22px] self-start pt-[22px]"><Caret /></button>
        </div>
        <div className="flex h-[38px] items-center pr-[18px]">
          <time className="flex-1 text-xs text-[#c0c0c0]">{date}</time>
          <button type="button" aria-label="Reply"><svg viewBox="0 0 18 14" className="h-[14px] w-[18px]"><path d="M7 0v4c7 1 10 5 11 10-3-3-6-4-11-4v4L0 7z" fill="#37474f" /></svg></button>
          <input type="checkbox" aria-label="Resolve" className="mr-4 ml-[17px] size-5 appearance-none rounded-xs border-2 border-[#757575]" />
          <button type="button" aria-label="More actions" className="px-2"><svg viewBox="0 0 4 16" className="h-4 w-1"><g fill="#37474f"><circle cx="2" cy="2" r="2" /><circle cx="2" cy="8" r="2" /><circle cx="2" cy="14" r="2" /></g></svg></button>
        </div>
      </div>
    </article>
  );
}

function Collaborator() {
  return (
    <aside className="flex w-[319px] shrink-0 flex-col pt-[2px]">
      <div role="tablist" className="flex shrink-0 items-end border-b border-[#8c8c8c] pl-3">
        <Tab label="Cameo Collaborator" slant="text-[#e4effd]" tone="bg-[#e4effd]" className="w-[124px]" />
      </div>
      <div className="flex min-h-0 flex-1 flex-col border-x border-[#bcd0ea] bg-[#dbe9fc] px-[2px] pt-[2px] pb-1">
        <TitleBar title="Distiller Model" tone="from-[#daf1fd] from-50% to-[#a6dcf8] to-50%" />
        <div className="flex h-6 shrink-0 items-center justify-between bg-[#f0f0f0] pr-[5px] pl-1">
          <Tool n="refresh" className="size-[14px]" />
          <div className="flex items-center gap-2"><Tool n="gear" label="Panel options" /><Drop /></div>
        </div>
        <div className="flex min-h-0 flex-1 flex-col bg-white font-[Roboto,sans-serif]">
          <div className="shrink-0 bg-[#5c6bc0] p-[7px]">
            <div className="flex h-[42px] items-center rounded bg-white px-[15px] text-[#9e9e9e]">
              <svg viewBox="0 0 18 18" className="size-[18px] shrink-0"><circle cx="6.500" cy="6.500" r="5.500" fill="none" stroke="currentColor" strokeWidth="2" /><path d="M10.500 10.500l6.500 6.500" stroke="currentColor" strokeWidth="2.400" /></svg>
              <input aria-label="Comment search" placeholder="Comment search" className="ml-[15px] min-w-0 flex-1 text-[15px] placeholder:text-[#757575]" />
              <button type="button" aria-label="Clear search"><svg viewBox="0 0 14 14" className="mr-1 size-[14px]"><path d="M1 1l12 12M13 1L1 13" stroke="currentColor" strokeWidth="1.800" /></svg></button>
            </div>
          </div>
          <div className="flex h-14 shrink-0 items-center justify-between bg-[#e8eaf6] pr-[22px] pl-4 text-sm text-[#333]">
            Today (2)<Caret />
          </div>
          <Comment title="Please add documentation" body="Please add documentation" date="Dec 11 at 11:19" className="border-l-[3px] border-[#ffc107] shadow-[0_1px_4px_#0006]" />
          <Comment title="Graphical comment for 2.distiller block diagram (initial allocated)" body="Graphical comment" date="Dec 11 at 11:17" className="border-b border-l-[3px] border-b-[#ddd] border-l-transparent" />
        </div>
      </div>
    </aside>
  );
}

function Annotations() {
  return (
    <svg className="pointer-events-none absolute -top-px -left-px h-[605px] w-[1206px]" viewBox="0 0 1206 605" aria-hidden="true">
      <g fill="none" stroke="#ff6a00">
        <path d="M900 318L228 158M900 320L251 520" strokeWidth="2" />
        <rect x="43.500" y="145.500" width="174" height="20" rx="9" strokeWidth="3" />
        <rect x="18.500" y="499" width="223" height="49" rx="8" strokeWidth="3" />
        <rect x="899.500" y="302.500" width="41" height="33" rx="8" fill="#fff" strokeWidth="3" />
      </g>
      <path d="M220 156l12-2-2.500 10zM243 522l9-8 3.500 10z" fill="#ff6a00" />
      <path d="M916 320V310c0-2 3-2 3 0v6c0-1.500 3-1.500 3 0v1c0-1.500 3-1.500 3 .5v1c0-1.500 3-1.500 3 .5v5l-2 3v3h-8v-2l-3-4-3-4c-1-2.500 1-3.500 2.500-2z" fill="#fff" stroke="#000" />
    </svg>
  );
}

export default function App() {
  return (
    <div className="relative flex h-screen flex-col overflow-hidden border border-[#0a64b4] bg-[#bfdbff] font-['DejaVu_Sans_Condensed','Noto_Sans',sans-serif] text-[11px] leading-4 text-black">
      <nav className="flex h-6 shrink-0 items-center gap-[9px] pr-1 pl-[6px] font-['Noto_Sans',sans-serif]">
        <span className="h-[11px] border-l-2 border-dotted border-[#6f9bd1]" />
        <div className="flex flex-1 gap-4">
          {["File", "Edit", "View", "Layout", "Diagrams", "Options", "Tools", "Analyze", "Collaborate", "Window", "Help"].map((m) => (
            <button type="button" key={m}>{m}</button>
          ))}
        </div>
        <button type="button" aria-label="Close" className="p-1">
          <svg viewBox="0 0 9 9" className="size-[9px]"><path d="M1 1l7 7M8 1L1 8" stroke="#333" strokeWidth="2.200" /></svg>
        </button>
      </nav>
      <div className="flex h-[25px] shrink-0 items-center gap-1 pl-px">
        <Group className="w-[264px] justify-between px-[3px]">
          <Grip /><Tool n="file" /><Tool n="open" /><Tool n="save" /><Drop /><Tool n="print" /><Tool n="preview" /><Tool n="binoc" label="Find" /><Drop /><Tool n="undo" /><Drop className="text-[#8a97a8]" /><Tool n="redo" /><Drop className="text-[#8a97a8]" /><Tool n="abc" label="Spelling" />
        </Group>
        <Group className="w-[54px] justify-between px-[3px]"><Grip /><Tool n="note" /><Tool n="check" /></Group>
        <Group className="w-11 justify-between px-[3px]"><Grip /><Tool n="transfer" /><Drop /></Group>
        <Group className="w-[186px] justify-between pl-[3px]">
          <Grip />
          <label htmlFor="perspective">Perspective:</label>
          <div className="relative flex">
            <select id="perspective" className="h-[22px] w-28 appearance-none border border-[#8a98ab] bg-white pl-[2px]"><option>Full Featured</option></select>
            <span className="pointer-events-none absolute inset-y-0 right-[5px] flex items-center"><Chevron d="M1 3l4 4 4-4" className="size-[9px]" /></span>
          </div>
        </Group>
        <Group className="gap-[6px] px-[3px]"><Grip /><button type="button" className="flex items-center gap-[3px]"><Icon n="create" />Create Diagram</button></Group>
      </div>
      <div className="flex min-h-0 flex-1 pr-px">
        <div className="flex w-[278px] shrink-0 flex-col pt-1 pr-1 pl-px">
          <div role="tablist" className="flex shrink-0 pl-2">
            <Tab icon="tree" label="Cont.." slant="text-[#ffe5b0]" tone="bg-linear-to-b from-[#fff0d0] to-[#ffd17a]" className="w-[78px]" />
            <Tab icon="diag" label="Diag.." className="w-[61px]" />
            <Tab icon="struct" label="Stru.." className="w-[61px]" />
            <Tab icon="locktree" label="Lock .." className="w-[61px]" />
          </div>
          <Containment />
          <div role="tablist" className="mt-[5px] flex shrink-0 pl-2">
            <Tab icon="zoomfit" label="Zoom" slant="text-[#bfdbff]" className="w-[78px]" />
            <Tab icon="doc" label="Doc.." className="-mr-[18px] w-[61px]" />
            <Tab icon="props" label="Prop.." slant="text-[#e4effd]" tone="bg-[#e4effd]" className="relative w-[79px]" />
            <Tab icon="hist" label="Cha.." className="w-[61px]" />
          </div>
          <Properties />
        </div>
        <Editor />
        <div className="w-[5px] shrink-0" />
        <Collaborator />
      </div>
      <footer className="flex h-6 shrink-0 items-center border-t border-[#5f92cf] bg-linear-to-b from-[#dce9fb] from-45% to-[#b4cff3] to-55% pl-[5px]">
        <Icon n="pc" />
        <span className="flex-1 pl-[2px]">Diagram Decomposition of Original Statement (399, 203 )</span>
        <span className="h-5 border-l border-[#7fa9dc]" />
        <span className="w-[13px]" />
        <Tool n="zout" label="Zoom out" />
        <input type="range" aria-label="Zoom" defaultValue={49} className="mx-[9px] h-5 w-[190px] appearance-none bg-transparent [&::-webkit-slider-runnable-track]:h-[3px] [&::-webkit-slider-runnable-track]:bg-[#d3d3d3] [&::-webkit-slider-thumb]:-mt-[8px] [&::-webkit-slider-thumb]:h-5 [&::-webkit-slider-thumb]:w-[5px] [&::-webkit-slider-thumb]:appearance-none [&::-webkit-slider-thumb]:bg-[#0078d7]" />
        <Tool n="zin" label="Zoom in" />
        <div className="relative mr-1 ml-[5px] flex">
          <select aria-label="Zoom level" className="h-5 w-[51px] appearance-none bg-white pl-[3px]"><option>100%</option></select>
          <span className="pointer-events-none absolute inset-y-0 right-1 flex items-center"><Chevron d="M1 3l4 4 4-4" className="size-[8px]" /></span>
        </div>
        <Tool n="zfit" label="Fit in window" />
        <span className="w-[7px]" />
        <Tool n="zone" label="Actual size" />
        <span className="mr-[14px] ml-4 h-5 border-l border-[#7fa9dc]" />
        <span className="pr-5"><Icon n="spin" /></span>
      </footer>
      <Annotations />
    </div>
  );
}
